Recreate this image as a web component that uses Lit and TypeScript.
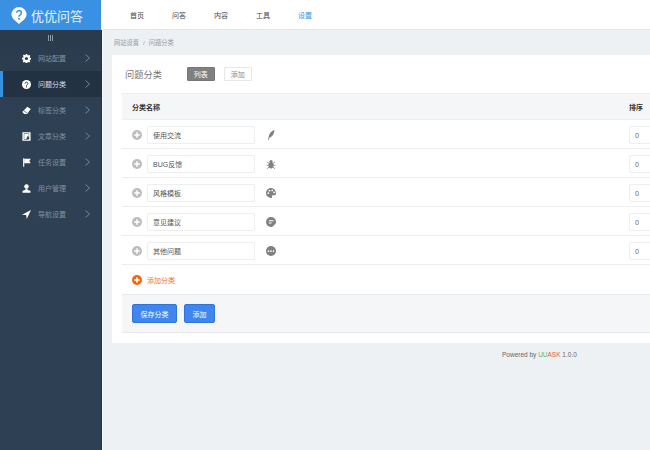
import { LitElement, html, css, svg } from 'lit';
import { customElement } from 'lit/decorators.js';

const navIcons = {
  gear: svg`<path d="M6.600 0h2.800l.4 2.300 1.200.5 1.900-1.300 2 2-1.300 1.900.5 1.200 2.300.4v2.800l-2.300.4-.5 1.200 1.300 1.900-2 2-1.900-1.300-1.200.5-.4 2.300H6.600l-.4-2.300-1.200-.5-1.900 1.300-2-2 1.300-1.900-.5-1.200L0 9.400V6.600l2.300-.4.5-1.200-1.300-1.900 2-2 1.900 1.300 1.200-.5z"/><circle cx="8" cy="8" r="2.800" fill="#2b3c4e"/>`,
  help: svg`<circle cx="8" cy="8" r="8"/><path d="M5.500 6.200a2.500 2.500 0 1 1 3.800 2.100c-.9.500-1.300.9-1.300 2" fill="none" stroke="#233242" stroke-width="1.700"/><rect x="7.100" y="11.300" width="1.800" height="1.800" fill="#233242"/>`,
  tag: svg`<path d="M9.500 1.500l6 4-6.500 8.500H4L.5 10.500z"/><path d="M3 8.500l6 4" stroke="#2e4053" stroke-width="1.200"/>`,
  article: svg`<path d="M2 1.500h12v13H2z" fill="none" stroke="currentColor" stroke-width="2.500"/><path d="M4 3.500h8v5L8.500 12.500H4z"/><path d="M10 7l2.500 2-3.500 4-2 .3z" fill="#2e4053"/>`,
  flag: svg`<path d="M2 .5h2v15H2z"/><path d="M4 1.500h11.500l-2.500 4 2.500 4H4z"/>`,
  user: svg`<circle cx="8" cy="4.500" r="4"/><path d="M6 8.500h4v2l5 1.500v3.500H1V12l5-1.500z"/>`,
  nav: svg`<path d="M16 0L0 8.400l7.500.4.900 7.200z"/>`,
};

const rowIcons = {
  feather: svg`<path d="M13.500 0C8.500 1.500 5 5.500 4.500 10L3 16h1l1.800-4.200C9.500 11.500 13 7 13.500 0z"/>`,
  bug: svg`<ellipse cx="8" cy="10" rx="4" ry="5"/><circle cx="8" cy="4" r="2.600"/><path d="M1.500 4.500l3.500 2.500M14.500 4.500L11 7M1 10h4M15 10h-4M1.500 15.500L5 13M14.500 15.500L11 13" stroke="currentColor" fill="none" stroke-width="1.300"/>`,
  palette: svg`<path d="M8 0a8 8 0 1 0 0 16c1.700 0 2-1.100 1.500-2.100-.5-1.100.1-2.300 1.300-2.300H13.500c1.400 0 2.500-1.100 2.500-2.500C16 3.800 12.500 0 8 0z"/><circle cx="3.800" cy="8.200" r="1.400" fill="#fff"/><circle cx="5.500" cy="4.300" r="1.400" fill="#fff"/><circle cx="10" cy="3.800" r="1.400" fill="#fff"/><circle cx="13" cy="7" r="1.400" fill="#fff"/>`,
  chat: svg`<path d="M8 0a8 8 0 0 1 8 8c0 1.100-.2 1.700-.7 2.600l-5 5c-.6.300-1.400.4-2.300.4A8 8 0 0 1 8 0z"/><path d="M4.500 6h7.500M4.500 9.500h4.500" stroke="#fff" stroke-width="1.700"/>`,
  more: svg`<circle cx="8" cy="8" r="8"/><circle cx="4" cy="8" r="1.400" fill="#fff"/><circle cx="8" cy="8" r="1.400" fill="#fff"/><circle cx="12" cy="8" r="1.400" fill="#fff"/>`,
};

const menu = [
  { label: '网站配置', icon: navIcons.gear },
  { label: '问题分类', icon: navIcons.help, active: true },
  { label: '标签分类', icon: navIcons.tag },
  { label: '文章分类', icon: navIcons.article },
  { label: '任务设置', icon: navIcons.flag },
  { label: '用户管理', icon: navIcons.user },
  { label: '导航设置', icon: navIcons.nav },
];

const rows = [
  { name: '使用交流', icon: rowIcons.feather },
  { name: 'BUG反馈', icon: rowIcons.bug },
  { name: '风格模板', icon: rowIcons.palette },
  { name: '意见建议', icon: rowIcons.chat },
  { name: '其他问题', icon: rowIcons.more },
];

const tabs = ['首页', '问答', '内容', '工具', '设置'];

@customElement('app-root')
export class AppRoot extends LitElement {
  static styles = css`
    :host {
      display: flex;
      width: 650px;
      height: 450px;
      overflow: hidden;
      font-family: "Liberation Sans", "Noto Sans CJK SC", sans-serif;
      font-size: 7px;
      color: #555;
      background: #eef1f4;
    }
    .side {
      width: 101px;
      flex: none;
      background: linear-gradient(#28394a, #2e4053 120px);
      display: flex;
      flex-direction: column;
    }
    .logo {
      height: 30px;
      background: #3a91e4;
      display: flex;
      align-items: center;
      gap: 4px;
      padding-left: 11px;
      color: #eaf4fd;
      font-size: 13px;
    }
    .logo svg { width: 16px; height: 17px; }
    .toggle {
      height: 15px;
      display: flex;
      justify-content: center;
      align-items: center;
      gap: 1px;
    }
    .toggle i { width: 1px; height: 6px; background: #8d9aa8; }
    .item {
      height: 26px;
      display: flex;
      align-items: center;
      padding-left: 22px;
      color: #8292a4;
      border-left: 0 solid #3a91e4;
    }
    .item .ic { width: 9px; height: 9px; color: #fff; fill: currentColor; margin-right: 7px; flex: none; }
    .item .chev { width: 5px; height: 8px; margin-left: 19px; stroke: #76859a; fill: none; stroke-width: 1; }
    .item.on { background: #233242; color: #d7dce2; border-left-width: 3px; padding-left: 19px; }
    .main { flex: 1; min-width: 0; display: flex; flex-direction: column; }
    .top {
      height: 30px;
      background: #fff;
      display: flex;
      align-items: center;
      gap: 28px;
      padding-left: 29px;
      color: #444;
      flex: none;
      border-bottom: 1px solid #e4e7ea;
      box-sizing: border-box;
    }
    .top .cur { color: #3a91e4; }
    .content {
      flex: 1;
      border-left: 1px solid #26343f;
      box-shadow: inset 1px 0 #f9fafb;
      display: flex;
      flex-direction: column;
    }
    .crumb {
      height: 25px;
      display: flex;
      align-items: center;
      gap: 4px;
      padding-left: 12px;
      color: #999;
      font-size: 6.250px;
      flex: none;
    }
    .panel {
      margin-left: 10px;
      width: 560px;
      height: 288px;
      background: #fff;
      flex: none;
      display: flex;
      flex-direction: column;
    }
    .title {
      height: 38px;
      flex: none;
      display: flex;
      align-items: center;
      padding-left: 13px;
      font-size: 9.250px;
      color: #777;
    }
    .title span { width: 62px; }
    .tab {
      width: 27.500px;
      height: 14px;
      box-sizing: border-box;
      display: flex;
      align-items: center;
      justify-content: center;
      font-size: 7px;
      border-radius: 1px;
      border: 1px solid #e8e8e8;
      color: #888;
      margin-right: 9.500px;
    }
    .tab.on { background: #808080; border-color: #777; color: #fff; }
    .grid { margin-left: 10px; width: 550px; flex: none; }
    .head {
      height: 27px;
      box-sizing: border-box;
      background: #f4f6f8;
      border-top: 1px solid #eceef0;
      border-bottom: 1px solid #eceef0;
      display: flex;
      align-items: center;
      justify-content: space-between;
      padding: 0 29px 0 10px;
      font-weight: bold;
      color: #333;
    }
    .row {
      height: 29px;
      box-sizing: border-box;
      border-bottom: 1px solid #eceef0;
      display: flex;
      align-items: center;
      padding: 2px 0 0 10px;
    }
    .plus { width: 10px; height: 10px; flex: none; margin-right: 5px; }
    .field {
      box-sizing: border-box;
      height: 18px;
      border: 1px solid #eceef0;
      border-radius: 2px;
      display: flex;
      align-items: center;
      padding-left: 5px;
      color: #555;
      background: #fff;
      flex: none;
    }
    .name { width: 108px; }
    .row .ic { width: 10px; height: 10px; fill: currentColor; color: #808080; margin-left: 11px; flex: none; }
    .sort { width: 30px; margin-left: 353px; color: #666; }
    .add {
      height: 29px;
      display: flex;
      align-items: center;
      gap: 5px;
      padding-left: 10px;
      color: #f0722c;
    }
    .add svg { width: 10px; height: 10px; }
    .foot {
      height: 39px;
      box-sizing: border-box;
      background: #f4f6f8;
      border-top: 1px solid #e6e8ea;
      border-bottom: 1px solid #e6e8ea;
      display: flex;
      align-items: center;
      gap: 7px;
      padding-left: 10px;
    }
    .btn {
      height: 19px;
      box-sizing: border-box;
      padding: 0 7.500px;
      display: flex;
      align-items: center;
      background: #3f86ee;
      border: 1px solid #2f74d8;
      border-radius: 2px;
      color: #fff;
    }
    .power {
      margin-top: 8px;
      padding-left: 400px;
      color: #666;
      font-size: 6.500px;
    }
    .power b { font-weight: normal; color: #e8603c; }
    .power em { font-style: normal; color: #5cb85c; }
  `;

  render() {
    return html`
      <div class="side">
        <div class="logo">
          <svg viewBox="0 0 16 18">
            <path d="M8 0a8 8 0 0 1 8 8c0 4-4 6.500-8 10C4 14.500 0 12 0 8a8 8 0 0 1 8-8z" fill="#fff"/>
            <path d="M5.500 6.200a2.500 2.500 0 1 1 3.800 2.100c-.9.500-1.300.9-1.300 2" fill="none" stroke="#3a91e4" stroke-width="1.600"/>
            <rect x="7.100" y="11.500" width="1.800" height="1.800" fill="#3a91e4"/>
          </svg>
          <span>优优问答</span>
        </div>
        <div class="toggle"><i></i><i></i><i></i></div>
        ${menu.map(m => html`
          <div class="item ${m.active ? 'on' : ''}">
            <svg class="ic" viewBox="0 0 16 16">${m.icon}</svg>
            <span>${m.label}</span>
            <svg class="chev" viewBox="0 0 5 8"><path d="M.5.5L4.500 4 .5 7.500"/></svg>
          </div>
        `)}
      </div>
      <div class="main">
        <div class="top">
          ${tabs.map((t, i) => html`<span class=${i === 4 ? 'cur' : ''}>${t}</span>`)}
        </div>
        <div class="content">
          <div class="crumb"><span>网站设置</span><span>/</span><span>问题分类</span></div>
          <div class="panel">
            <div class="title">
              <span>问题分类</span>
              <div class="tab on">列表</div>
              <div class="tab">添加</div>
            </div>
            <div class="grid">
              <div class="head"><span>分类名称</span><span>排序</span></div>
              ${rows.map(r => html`
                <div class="row">
                  <svg class="plus" viewBox="0 0 16 16">
                    <circle cx="8" cy="8" r="8" fill="#bdbdbd"/>
                    <path d="M8 3.500v9M3.500 8h9" stroke="#fff" stroke-width="2.400"/>
                  </svg>
                  <div class="field name">${r.name}</div>
                  <svg class="ic" viewBox="0 0 16 16">${r.icon}</svg>
                  <div class="field sort">0</div>
                </div>
              `)}
              <div class="add">
                <svg viewBox="0 0 16 16">
                  <circle cx="8" cy="8" r="8" fill="#f2640f"/>
                  <path d="M8 3.500v9M3.500 8h9" stroke="#fff" stroke-width="2.400"/>
                </svg>
                <span>添加分类</span>
              </div>
              <div class="foot">
                <div class="btn">保存分类</div>
                <div class="btn">添加</div>
              </div>
            </div>
          </div>
          <div class="power">Powered by <em>UU</em><b>ASK</b> 1.0.0</div>
        </div>
      </div>
    `;
  }
}
